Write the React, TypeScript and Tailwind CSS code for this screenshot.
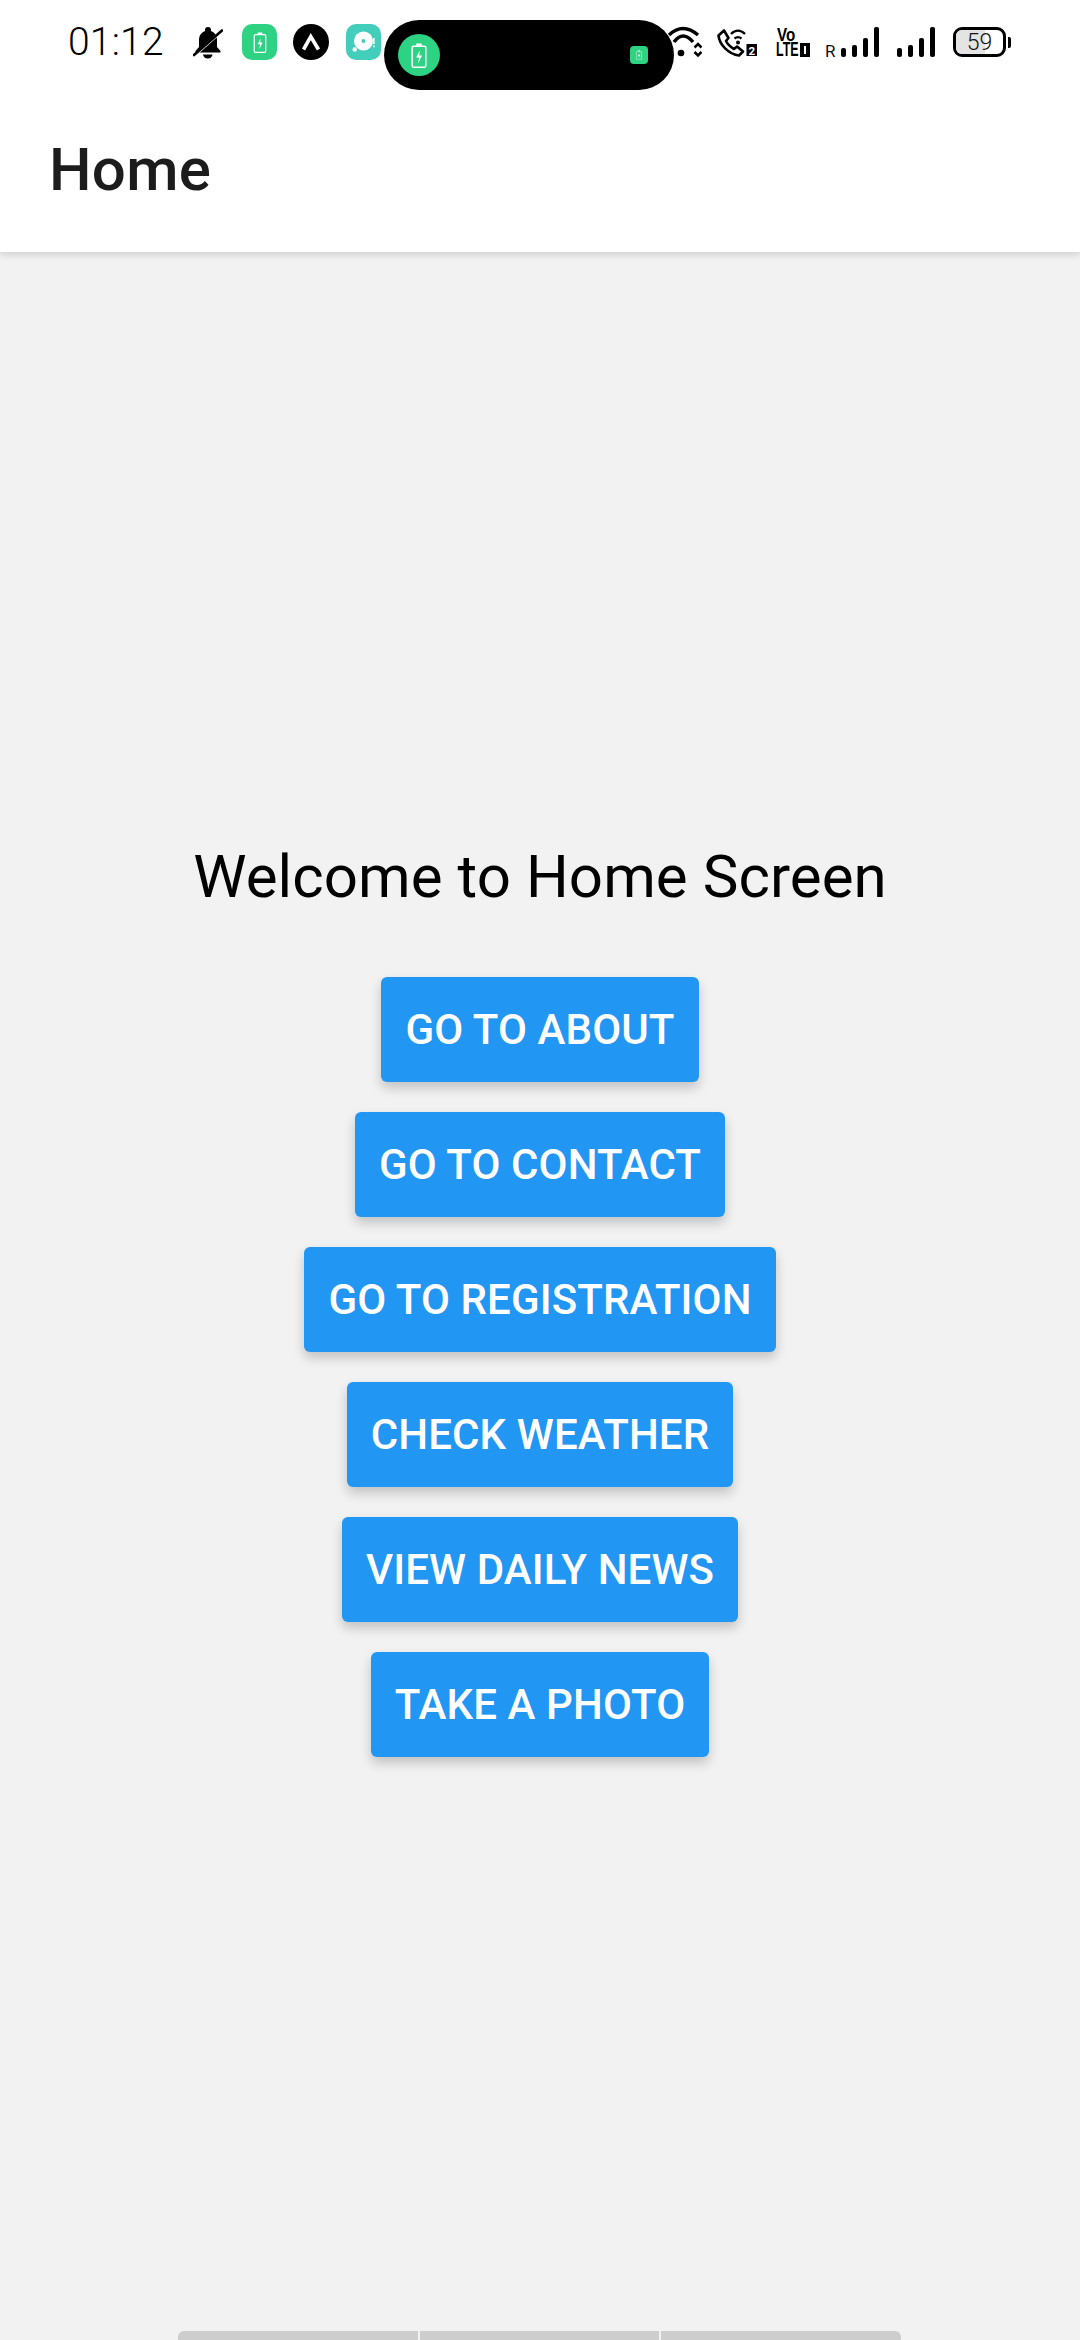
const F = "font-['Roboto',sans-serif]";

function Bell() {
  return (
    <svg width="30" height="36" viewBox="0 0 30 36" className="block">
      <path d="M15 3a3 3 0 0 1 3 3v1c4 1.500 6 5 6 9v7l3.500 4v1.500H2.500V27L6 23v-7c0-4 2-7.500 6-9V6a3 3 0 0 1 3-3z" fill="#000" />
      <path d="M10 30.500h9.500a4.750 4 0 0 1-9.500 0z" fill="#000" />
      <path d="M3 30L31 5" stroke="#fff" strokeWidth="3" />
      <path d="M1 31L29 6.500" stroke="#000" strokeWidth="2.600" strokeLinecap="round" />
    </svg>
  );
}

function BatteryGlyph({ w, h, sw = 1.300 }: { w: number; h: number; sw?: number }) {
  return (
    <svg width={w} height={h} viewBox="0 0 14 22" fill="none" className="block">
      <rect x="1" y="2.800" width="12" height="18.500" rx="1.200" stroke="#fff" strokeWidth={sw} />
      <rect x="4.500" y="0.500" width="5" height="2" rx="0.500" fill="#fff" />
      <path d="M7.800 6.500L4.500 12.800H7L6.200 18L9.700 11H7.200z" fill="#fff" />
    </svg>
  );
}

function Arrow() {
  return (
    <svg width="36" height="36" viewBox="0 0 36 36" className="block">
      <circle cx="18" cy="18" r="18" fill="#000" />
      <path d="M10.500 25.500L17.800 12.500L25.500 25.500" fill="none" stroke="#fff" strokeWidth="3.600" />
    </svg>
  );
}

function Disc() {
  return (
    <svg width="35" height="36" viewBox="0 0 35 36" className="block">
      <rect width="35" height="36" rx="10" fill="#43cdbb" />
      <circle cx="17.500" cy="17" r="9.500" fill="#fff" />
      <circle cx="17.500" cy="17" r="2" fill="#43cdbb" />
      <circle cx="8.700" cy="25.500" r="2.200" fill="#fff" />
      <rect x="27" y="14" width="1.800" height="6" fill="#fff" fillOpacity="0.850" />
      <rect x="27" y="21.500" width="1.800" height="1.800" fill="#fff" fillOpacity="0.850" />
    </svg>
  );
}

function Wifi() {
  return (
    <svg width="36" height="36" viewBox="0 0 36 36" fill="none" className="block">
      <path d="M3 11Q17-2 32 11" stroke="#000" strokeWidth="3.400" />
      <path d="M8 18Q17 6 27 18" stroke="#000" strokeWidth="3.400" />
      <circle cx="15" cy="29" r="3.300" fill="#000" />
      <path d="M28.500 23.500L32 20L35.500 23.500M28.500 28L32 31.500L35.500 28" stroke="#000" strokeWidth="2.600" />
    </svg>
  );
}

function Call() {
  return (
    <svg width="40" height="36" viewBox="0 0 40 36" fill="none" className="block">
      <path d="M1.500 11.500L7 6.500L11.500 14L9 17C10.500 20 13.500 23 17 25L20 22.500L26 27.500L22 31.500C12 30.500 2.500 21 1.500 11.500z" stroke="#000" strokeWidth="2.600" strokeLinejoin="round" />
      <path d="M14 10c4.500-4.500 9.500-4.500 14 0M17.500 14.500c2.500-2 4.500-2 7 0" stroke="#000" strokeWidth="2.300" />
      <circle cx="21" cy="18.500" r="2" fill="#000" />
      <rect x="29.500" y="20" width="10.500" height="12" fill="#000" />
      <text x="34.800" y="30.500" textAnchor="middle" fontFamily="Roboto, sans-serif" fontWeight="700" fontSize="11.500" fill="#fff">2</text>
    </svg>
  );
}

function Volte() {
  return (
    <div className="w-[34px] h-[36px] flex flex-col pt-[3px] font-['Liberation_Sans',sans-serif] font-bold text-black">
      <div className="h-[15px] ml-[1px] text-[18.500px] leading-[15px] origin-top-left scale-x-[0.82]">Vo</div>
      <div className="h-[15px] flex items-center justify-between">
        <span className="text-[19.500px] leading-[15px] w-[24px] origin-left scale-x-[0.64]">LTE</span>
        <div className="w-[10px] h-[14px] bg-black flex items-center justify-center">
          <div className="w-[2px] h-[8px] bg-white" />
        </div>
      </div>
    </div>
  );
}

function Bars({ hasR }: { hasR?: boolean }) {
  const heights = [9, 12, 19, 30];
  return (
    <div className="flex items-end gap-[6px] h-[30px]">
      {hasR && <span className="text-[17px] leading-[12px] w-[10px] text-[#111]">R</span>}
      {heights.map((h, i) => (
        <div key={i} className="w-[5px] bg-black rounded-[2px]" style={{ height: h }} />
      ))}
    </div>
  );
}

function Battery() {
  return (
    <div className="flex items-center">
      <div className="relative w-[53px] h-[30px] rounded-[9px] border-[3px] border-black bg-white flex items-center justify-center overflow-hidden">
        <div className="absolute left-0 top-0 bottom-0 w-[29px] bg-[#e4e4e4]" />
        <span className="relative text-[23px] leading-none font-light text-[#111]">59</span>
      </div>
      <div className="w-[3px] h-[11px] ml-[2px] bg-black rounded-r-[2px]" />
    </div>
  );
}

const labels = ["GO TO ABOUT", "GO TO CONTACT", "GO TO REGISTRATION", "CHECK WEATHER", "VIEW DAILY NEWS", "TAKE A PHOTO"];

export default function App() {
  return (
    <div className={`${F} relative w-[1080px] h-[2340px] bg-[#f2f2f2] overflow-hidden flex flex-col`}>
      <header className="relative z-10 h-[252px] bg-white shadow-[0_2px_8px_rgba(0,0,0,0.16)] flex flex-col shrink-0">
        <div className="h-[84px] pl-[68px] pr-[69px] flex items-center justify-between shrink-0">
          <div className="flex items-center h-[36px]">
            <span className="text-[39px] leading-none font-[350] text-black tracking-[0.2px] w-[125px]">01:12</span>
            <Bell />
            <div className="ml-[19px] w-[35px] h-[36px] rounded-[10px] bg-[#2ed283] flex items-center justify-center"><BatteryGlyph w={14} h={21} /></div>
            <div className="ml-[16px]"><Arrow /></div>
            <div className="ml-[17px]"><Disc /></div>
          </div>
          <div className="flex items-center h-[36px]">
            <Wifi />
            <div className="ml-[15px]"><Call /></div>
            <div className="ml-[19px]"><Volte /></div>
            <div className="ml-[15px]"><Bars hasR /></div>
            <div className="ml-[18px]"><Bars /></div>
            <div className="ml-[18px]"><Battery /></div>
          </div>
        </div>
        <div className="flex-1 pl-[49px] pt-[4px] flex items-center">
          <h1 className="text-[60px] leading-[70px] font-medium text-[#1c1c1c] tracking-[0.3px]">Home</h1>
        </div>
      </header>

      <div className="absolute z-20 left-[384px] top-[20px] w-[290px] h-[70px] rounded-[35px] bg-black flex items-center justify-between pl-[14px] pr-[26px]">
        <div className="w-[42px] h-[42px] rounded-full bg-[#2ed283] flex items-center justify-center"><BatteryGlyph w={16} h={25} /></div>
        <div className="w-[18px] h-[18px] rounded-[4px] bg-[#2ed283] flex items-center justify-center"><BatteryGlyph w={6} h={10} sw={1} /></div>
      </div>

      <main className="flex-1 flex flex-col items-center pt-[590px]">
        <p className="text-[60px] leading-[70px] text-black tracking-[0.08px]">Welcome to Home Screen</p>
        <div className="mt-[65px] flex flex-col items-center gap-[30px]">
          {labels.map((l) => (
            <button key={l} className="h-[105px] px-[24px] rounded-[6px] bg-[#2196f3] text-white text-[42px] font-medium tracking-[0.12px] shadow-[0_6px_12px_rgba(0,0,0,0.2)]">
              {l}
            </button>
          ))}
        </div>
      </main>

      <div className="absolute left-[178px] bottom-0 w-[723px] h-[9px] flex gap-[2px]">
        <div className="flex-1 bg-[#cdcdcd] rounded-tl-[6px]" />
        <div className="flex-1 bg-[#cdcdcd]" />
        <div className="flex-1 bg-[#cdcdcd] rounded-tr-[6px]" />
      </div>
    </div>
  );
}
